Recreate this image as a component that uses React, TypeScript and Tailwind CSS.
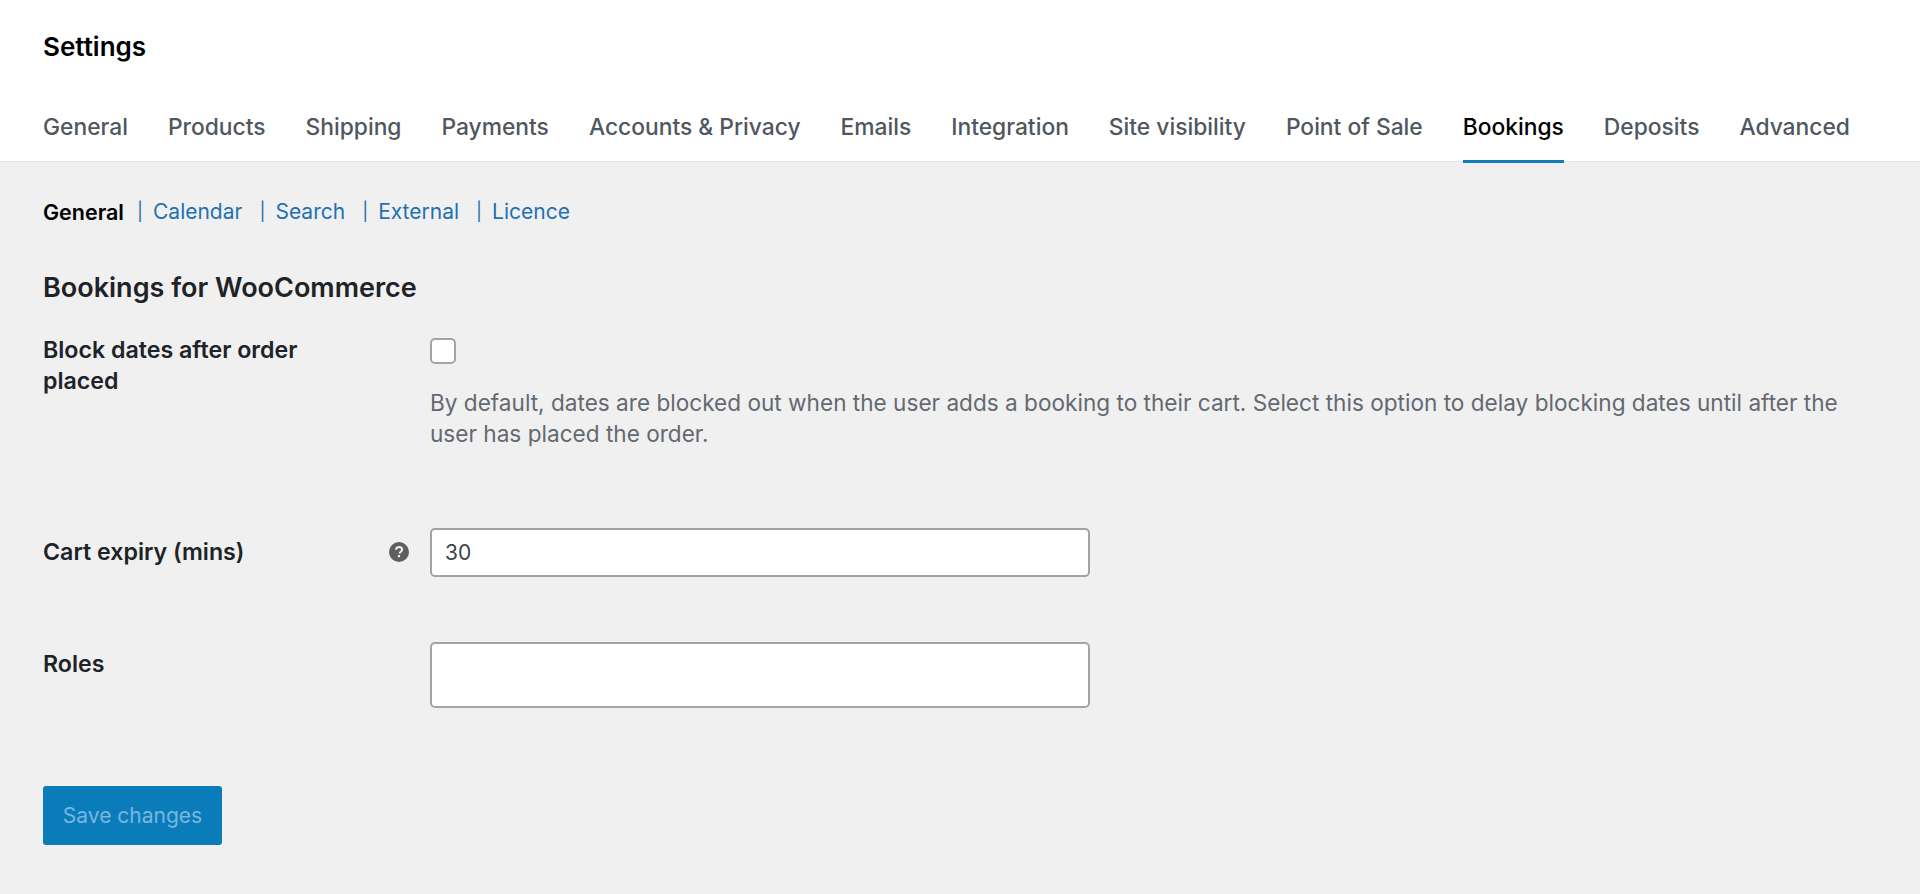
const tabs = [
  "General",
  "Products",
  "Shipping",
  "Payments",
  "Accounts & Privacy",
  "Emails",
  "Integration",
  "Site visibility",
  "Point of Sale",
  "Bookings",
  "Deposits",
  "Advanced",
];

const subTabs = ["Calendar", "Search", "External", "Licence"];

function HelpIcon() {
  return (
    <svg viewBox="0 0 20 20" className="h-[20px] w-[20px]">
      <circle cx="10" cy="10" r="10" fill="#5f5f5f" />
      <path d="M7 7.8c.1-1.8 1.4-2.8 3.1-2.8 1.8 0 3 1 3 2.5 0 1.100-.6 1.700-1.400 2.300-.8.5-1.100.9-1.100 1.700" fill="none" stroke="#f0f0f1" strokeWidth="2" />
      <rect x="8.900" y="13" width="2.200" height="2.200" fill="#f0f0f1" />
    </svg>
  );
}

export default function App() {
  return (
    <div className="flex h-[894px] flex-col overflow-hidden bg-[#f0f0f1] font-['Inter',sans-serif] text-[#1d2327]">
      <header className="h-[162px] border-b border-[#e4e4e6] bg-white px-[43px]">
        <h1 className="h-[92px] pt-[30px] text-[26px] leading-[33px] font-semibold text-black">Settings</h1>
        <nav className="flex h-[70px] gap-[40px]">
          {tabs.map((tab) => (
            <a
              key={tab}
              className={
                tab === "Bookings"
                  ? "h-[71px] border-b-[3px] border-[#127bb8] pt-[22px] text-[22.800px] leading-[26px] font-medium text-black"
                  : "h-[70px] pt-[22px] text-[22.800px] leading-[26px] font-medium text-[#50575e]"
              }
            >
              {tab}
            </a>
          ))}
        </nav>
      </header>

      <main className="flex-1 px-[43px]">
        <div className="flex h-[100px] items-start pt-[37px] text-[21px] leading-[26px]">
          <span className="text-[21.500px] font-semibold text-black">General</span>
          {subTabs.map((tab, i) => (
            <span key={tab} className={i === 0 ? "ml-[13px] flex items-center text-[#2271b1]" : "ml-[17px] flex items-center text-[#2271b1]"}>
              <span className="text-[18px]">|</span>
              <a className="ml-[10px]">{tab}</a>
            </span>
          ))}
        </div>

        <h2 className="h-[40px] text-[27px] leading-[52px] font-semibold">Bookings for WooCommerce</h2>

        <div className="mt-[33px] flex h-[193px]">
          <div className="w-[387px] text-[23.200px] leading-[31px] font-semibold">
            <div className="w-[300px]">Block dates after order placed</div>
          </div>
          <div>
            <div className="mt-[3px] h-[26px] w-[26px] rounded-[5px] border-2 border-[#a0a4a8] bg-white" />
            <p className="mt-[23px] w-[1420px] text-[22.600px] leading-[31px] text-[#646970]">
              By default, dates are blocked out when the user adds a booking to their cart. Select this option to delay blocking dates until after the user has placed the order.
            </p>
          </div>
        </div>

        <div className="flex h-[114px]">
          <div className="flex h-[48px] w-[387px] items-center justify-between pr-[21px] text-[23.200px] font-semibold">
            Cart expiry (mins)
            <HelpIcon />
          </div>
          <div className="flex h-[49px] w-[660px] items-center rounded-[5px] border-2 border-[#a0a4a8] bg-white px-[13px] text-[21px] text-[#3c434a]">30</div>
        </div>

        <div className="flex h-[144px]">
          <div className="w-[387px] pt-[9px] text-[23.200px] leading-[26px] font-semibold">Roles</div>
          <div className="h-[66px] w-[660px] rounded-[5px] border-2 border-[#a0a4a8] bg-white" />
        </div>

        <button className="flex h-[59px] w-[179px] items-center justify-center rounded-[3px] bg-[#0b7cba] text-[21px] text-[#78b6e0]">Save changes</button>
      </main>
    </div>
  );
}
